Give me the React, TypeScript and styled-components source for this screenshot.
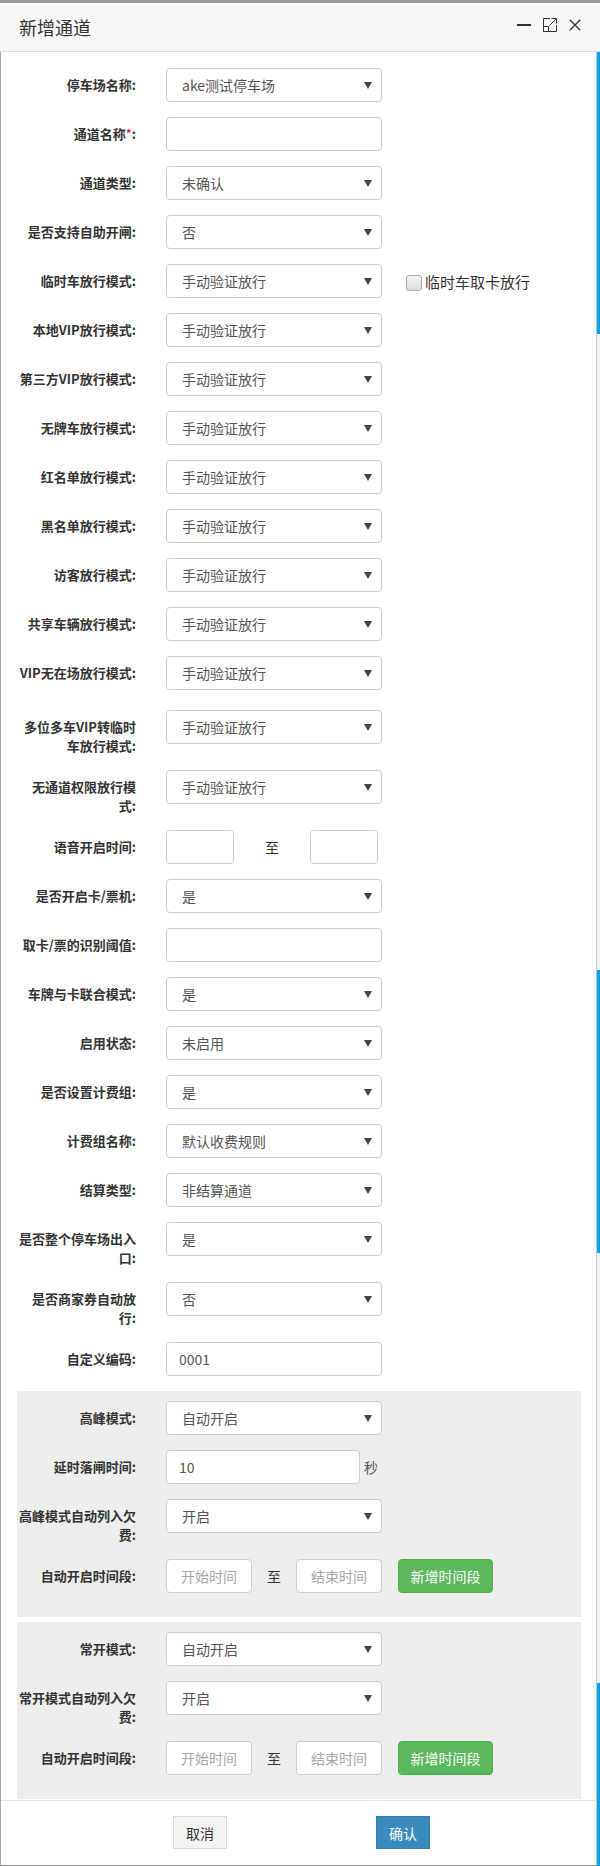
import React from "react";
import styled, { createGlobalStyle } from "styled-components";

const Global = createGlobalStyle`
  html, body { margin: 0; padding: 0; background: #fff; }
  body { font-family: "Noto Sans CJK SC", "Microsoft YaHei", sans-serif; color: #333; }
  * { box-sizing: border-box; }
`;

const Dialog = styled.div`
  width: 600px;
  height: 1866px;
  display: flex;
  flex-direction: column;
  background: #fff;
  border-top: 3px solid #9c9c9c;
  border-bottom: 1px solid #8a8a8a;
`;

const TitleBar = styled.div`
  height: 49px;
  flex-shrink: 0;
  background: #f8f8f8;
  border-bottom: 1px solid #dcdcdc;
  display: flex;
  align-items: center;
  justify-content: space-between;
  padding: 0 19px 0 19px;
`;

const Title = styled.h1`
  margin: 0;
  font-size: 18px;
  font-weight: 400;
  color: #333;
  line-height: 24px;
`;

const WinTools = styled.div`
  display: flex;
  align-items: center;
  gap: 12px;
  margin-bottom: 5px;
  color: #333;
`;

const Body = styled.div`
  flex: 1;
  display: flex;
  min-height: 0;
  border-left: 1px solid #a8a8a8;
`;

const Main = styled.div`
  flex: 1;
  display: flex;
  flex-direction: column;
  min-width: 0;
`;

const Form = styled.form`
  flex: 1;
  padding: 16px 15px 0 16px;
`;

const ScrollTrack = styled.div`
  width: 4px;
  flex-shrink: 0;
  position: relative;
  background: #f1f1f1;
  border-left: 1px solid #c6c6c6;
`;

const Thumb = styled.div<{ $top: number; $h: number }>`
  position: absolute;
  left: 0;
  right: 0;
  top: ${(p) => p.$top}px;
  height: ${(p) => p.$h}px;
  background: #00a3ee;
`;

const Row = styled.div<{ $extraTop?: boolean }>`
  display: flex;
  align-items: flex-start;
  margin-bottom: 15px;
  padding-top: ${(p) => (p.$extraTop ? "5px" : "0")};
`;

const Label = styled.label`
  width: 119px;
  flex-shrink: 0;
  margin-right: 30px;
  padding-top: 7px;
  text-align: right;
  font-size: 13px;
  line-height: 19px;
  font-weight: 700;
  color: #333;
`;

const Req = styled.span`
  color: #f00;
  font-weight: 400;
`;

const SelectWrap = styled.div<{ $w?: number }>`
  position: relative;
  width: ${(p) => p.$w ?? 216}px;
  height: 34px;
  flex-shrink: 0;
  &::after {
    content: "";
    position: absolute;
    right: 10px;
    top: 14px;
    border-left: 4px solid transparent;
    border-right: 4px solid transparent;
    border-top: 7px solid #444;
    pointer-events: none;
  }
`;

const Select = styled.select`
  appearance: none;
  -webkit-appearance: none;
  width: 100%;
  height: 100%;
  border: 1px solid #ccc;
  border-radius: 4px;
  background: #fff;
  padding: 0 24px 0 15px;
  font-family: inherit;
  font-size: 14px;
  color: #555;
  outline: none;
`;

const TextInput = styled.input<{ $w?: number; $center?: boolean }>`
  width: ${(p) => p.$w ?? 216}px;
  height: 34px;
  flex-shrink: 0;
  border: 1px solid #ccc;
  border-radius: 4px;
  background: #fff;
  padding: 0 12px;
  font-family: inherit;
  font-size: 14px;
  color: #555;
  text-align: ${(p) => (p.$center ? "center" : "left")};
  outline: none;
  &::placeholder {
    color: #a8a8a8;
  }
`;

const Sep = styled.span<{ $w: number }>`
  width: ${(p) => p.$w}px;
  height: 34px;
  line-height: 34px;
  text-align: center;
  font-size: 14px;
  color: #333;
  flex-shrink: 0;
`;

const Unit = styled.span`
  margin-left: 4px;
  height: 34px;
  line-height: 34px;
  font-size: 14px;
  color: #555;
`;

const CheckGroup = styled.label`
  display: flex;
  align-items: center;
  height: 34px;
  margin-left: 24px;
  font-size: 15px;
  color: #333;
  gap: 3px;
`;

const CheckBox = styled.span`
  width: 16px;
  height: 16px;
  margin-top: 3px;
  border: 1px solid #a9a9a9;
  border-radius: 3px;
  background: linear-gradient(#f4f4f4, #dcdcdc);
`;

const AddButton = styled.button`
  width: 95px;
  height: 34px;
  margin-left: 16px;
  border: 1px solid #4cae4c;
  border-radius: 4px;
  background: #5cb85c;
  color: #fff;
  font-family: inherit;
  font-size: 14px;
  padding: 0;
`;

const Section = styled.div`
  background: #ededed;
  padding: 10px 0 9px;
  & + & {
    margin-top: 5px;
  }
`;

const Footer = styled.div`
  height: 65px;
  flex-shrink: 0;
  border-top: 1px solid #e3e3e3;
  display: flex;
  justify-content: center;
  align-items: flex-start;
  padding: 15px 0 0 6px;
  gap: 149px;
`;

const FootBtn = styled.button<{ $primary?: boolean }>`
  width: 54px;
  height: 33px;
  border: 1px solid ${(p) => (p.$primary ? "#367fa9" : "#dadada")};
  background: ${(p) => (p.$primary ? "#3a8bbd" : "#f3f3f3")};
  color: ${(p) => (p.$primary ? "#fff" : "#333")};
  font-family: inherit;
  font-size: 14px;
  border-radius: 0;
  padding: 0;
`;

const MinIcon = () => (
  <svg width="14" height="14" viewBox="0 0 14 14">
    <rect x="0" y="6" width="14" height="2" fill="#333" />
  </svg>
);

const MaxIcon = () => (
  <svg width="14" height="14" viewBox="0 0 14 14" fill="none" stroke="#333" strokeWidth="1">
    <path d="M7 0.5 H0.5 V13.5 H13.5 V7" />
    <rect x="0.5" y="8.5" width="5" height="5" />
    <path d="M6.5 7.5 L13 1" />
    <path d="M8.5 0.5 H13.5 V5.5" />
  </svg>
);

const CloseIcon = () => (
  <svg width="12" height="12" viewBox="0 0 12 12" fill="none" stroke="#333" strokeWidth="1.3">
    <path d="M0.8 0.8 L11.2 11.2 M11.2 0.8 L0.8 11.2" />
  </svg>
);

const Sel = ({ value, options }: { value: string; options?: string[] }) => (
  <SelectWrap>
    <Select defaultValue={value}>
      {(options ?? [value]).map((o) => (
        <option key={o}>{o}</option>
      ))}
    </Select>
  </SelectWrap>
);

const MODE = ["手动验证放行", "自动放行", "禁止放行"];
const YESNO = ["是", "否"];

const releaseRows = [
  "本地VIP放行模式:",
  "第三方VIP放行模式:",
  "无牌车放行模式:",
  "红名单放行模式:",
  "黑名单放行模式:",
  "访客放行模式:",
  "共享车辆放行模式:",
  "VIP无在场放行模式:",
];

export default function App() {
  return (
    <>
      <Global />
      <Dialog>
        <TitleBar>
          <Title>新增通道</Title>
          <WinTools>
            <MinIcon />
            <MaxIcon />
            <CloseIcon />
          </WinTools>
        </TitleBar>
        <Body>
          <Main>
            <Form>
              <Row>
                <Label>停车场名称:</Label>
                <Sel value="ake测试停车场" />
              </Row>
              <Row>
                <Label>
                  通道名称<Req>*</Req>:
                </Label>
                <TextInput />
              </Row>
              <Row>
                <Label>通道类型:</Label>
                <Sel value="未确认" options={["未确认", "入口", "出口"]} />
              </Row>
              <Row>
                <Label>是否支持自助开闸:</Label>
                <Sel value="否" options={YESNO} />
              </Row>
              <Row>
                <Label>临时车放行模式:</Label>
                <Sel value="手动验证放行" options={MODE} />
                <CheckGroup>
                  <CheckBox />
                  临时车取卡放行
                </CheckGroup>
              </Row>
              {releaseRows.map((l) => (
                <Row key={l}>
                  <Label>{l}</Label>
                  <Sel value="手动验证放行" options={MODE} />
                </Row>
              ))}
              <Row $extraTop>
                <Label>多位多车VIP转临时车放行模式:</Label>
                <Sel value="手动验证放行" options={MODE} />
              </Row>
              <Row>
                <Label>无通道权限放行模式:</Label>
                <Sel value="手动验证放行" options={MODE} />
              </Row>
              <Row>
                <Label>语音开启时间:</Label>
                <TextInput $w={68} />
                <Sep $w={76}>至</Sep>
                <TextInput $w={68} />
              </Row>
              <Row>
                <Label>是否开启卡/票机:</Label>
                <Sel value="是" options={YESNO} />
              </Row>
              <Row>
                <Label>取卡/票的识别阈值:</Label>
                <TextInput />
              </Row>
              <Row>
                <Label>车牌与卡联合模式:</Label>
                <Sel value="是" options={YESNO} />
              </Row>
              <Row>
                <Label>启用状态:</Label>
                <Sel value="未启用" options={["未启用", "启用"]} />
              </Row>
              <Row>
                <Label>是否设置计费组:</Label>
                <Sel value="是" options={YESNO} />
              </Row>
              <Row>
                <Label>计费组名称:</Label>
                <Sel value="默认收费规则" />
              </Row>
              <Row>
                <Label>结算类型:</Label>
                <Sel value="非结算通道" options={["非结算通道", "结算通道"]} />
              </Row>
              <Row>
                <Label>是否整个停车场出入口:</Label>
                <Sel value="是" options={YESNO} />
              </Row>
              <Row>
                <Label>是否商家券自动放行:</Label>
                <Sel value="否" options={YESNO} />
              </Row>
              <Row>
                <Label>自定义编码:</Label>
                <TextInput defaultValue="0001" />
              </Row>

              <Section>
                <Row>
                  <Label>高峰模式:</Label>
                  <Sel value="自动开启" options={["自动开启", "手动开启", "关闭"]} />
                </Row>
                <Row>
                  <Label>延时落闸时间:</Label>
                  <TextInput $w={194} defaultValue="10" />
                  <Unit>秒</Unit>
                </Row>
                <Row>
                  <Label>高峰模式自动列入欠费:</Label>
                  <Sel value="开启" options={["开启", "关闭"]} />
                </Row>
                <Row>
                  <Label>自动开启时间段:</Label>
                  <TextInput $w={86} $center placeholder="开始时间" />
                  <Sep $w={44}>至</Sep>
                  <TextInput $w={86} $center placeholder="结束时间" />
                  <AddButton type="button">新增时间段</AddButton>
                </Row>
              </Section>
              <Section>
                <Row>
                  <Label>常开模式:</Label>
                  <Sel value="自动开启" options={["自动开启", "手动开启", "关闭"]} />
                </Row>
                <Row>
                  <Label>常开模式自动列入欠费:</Label>
                  <Sel value="开启" options={["开启", "关闭"]} />
                </Row>
                <Row>
                  <Label>自动开启时间段:</Label>
                  <TextInput $w={86} $center placeholder="开始时间" />
                  <Sep $w={44}>至</Sep>
                  <TextInput $w={86} $center placeholder="结束时间" />
                  <AddButton type="button">新增时间段</AddButton>
                </Row>
              </Section>
            </Form>
            <Footer>
              <FootBtn type="button">取消</FootBtn>
              <FootBtn type="button" $primary>
                确认
              </FootBtn>
            </Footer>
          </Main>
          <ScrollTrack>
            <Thumb $top={0} $h={282} />
            <Thumb $top={918} $h={283} />
            <Thumb $top={1631} $h={190} />
          </ScrollTrack>
        </Body>
      </Dialog>
    </>
  );
}
